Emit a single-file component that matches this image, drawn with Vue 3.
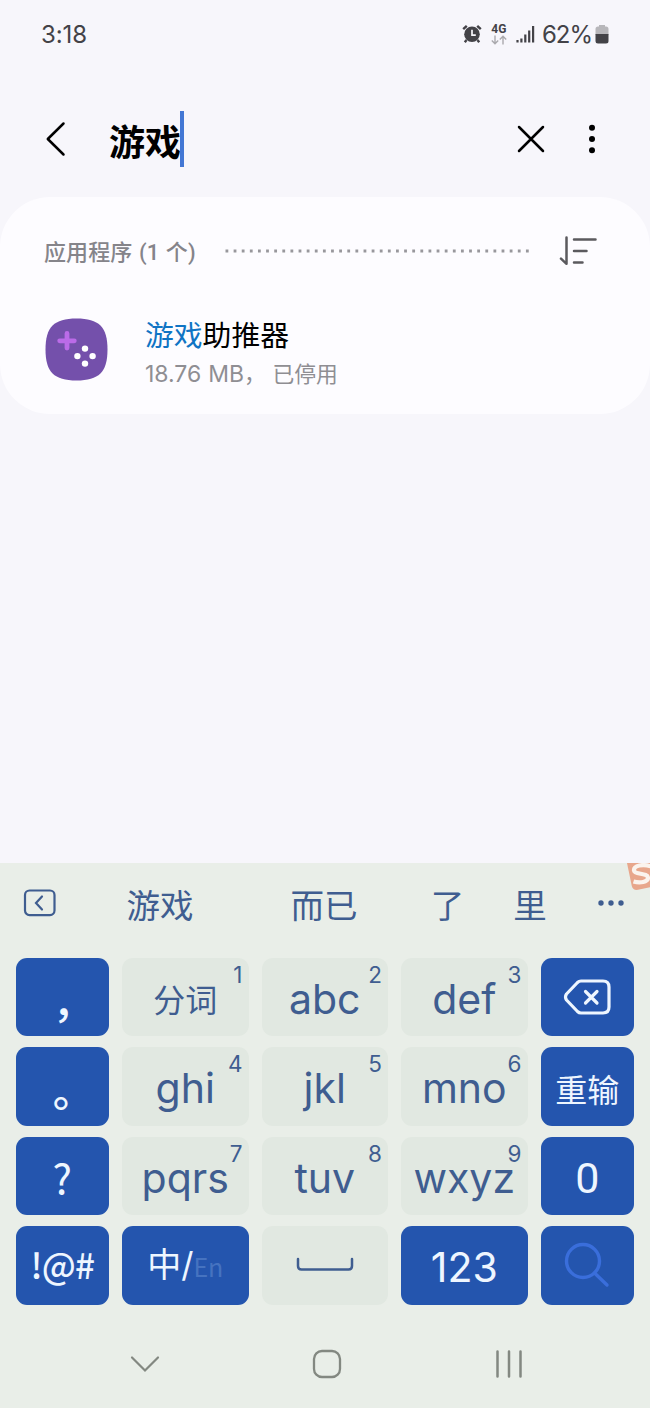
<template>
  <div class="screen">
    <header class="status-bar">
      <span class="clock">3:18</span>
      <div class="status-icons">
        <svg class="alarm" width="20" height="20" viewBox="0 0 20 20">
          <circle cx="10" cy="10.3" r="7.8" fill="#434247" />
          <path d="M1.2 5.2 4.8 1.8M18.8 5.2 15.2 1.8M4.5 16 2.8 18.2M15.5 16l1.7 2.2" stroke="#434247" stroke-width="2.4" />
          <path d="M10 5.8v5.4h3.8" fill="none" stroke="#f7f6fb" stroke-width="1.7" />
        </svg>
        <div class="network">
          <span>4G</span>
          <svg width="16" height="10" viewBox="0 0 16 10">
            <path d="M4 .5v8M.8 5.4 4 8.8l3.2-3.4M12 9.5v-8M8.8 4.6 12 1.2l3.2 3.4" fill="none" stroke="#aaa9ad" stroke-width="1.4" />
          </svg>
        </div>
        <svg class="signal" width="19" height="18" viewBox="0 0 19 18">
          <path d="M1.5 15v2.5M5.4 13.5v4M9.3 9.5v8M13.2 5.5v12M17.1 1v16.5" stroke="#434247" stroke-width="2.2" />
        </svg>
        <span class="percent">62%</span>
        <svg class="battery" width="14" height="19" viewBox="0 0 14 19">
          <path d="M4 0h6v2H4zM3 1.5h8a2.5 2.5 0 0 1 2.5 2.5v6H.5V4A2.5 2.5 0 0 1 3 1.5z" fill="#b7b6ba" />
          <path d="M.5 9h13v7a2.5 2.5 0 0 1-2.5 2.5H3A2.5 2.5 0 0 1 .5 16z" fill="#434247" />
        </svg>
      </div>
    </header>

    <div class="search-bar">
      <svg class="back" width="22" height="36" viewBox="0 0 22 36">
        <path d="M18.5 2.5 2.8 18l15.7 15.5" fill="none" stroke="#000" stroke-width="2.5" stroke-linecap="round" stroke-linejoin="round" />
      </svg>
      <span class="query">游戏</span>
      <span class="caret"></span>
      <svg class="clear" width="28" height="28" viewBox="0 0 28 28">
        <path d="M2 2l24 24M26 2 2 26" stroke="#000" stroke-width="2.5" stroke-linecap="round" />
      </svg>
      <svg class="more" width="8" height="30" viewBox="0 0 8 30">
        <circle cx="4" cy="3.7" r="3" />
        <circle cx="4" cy="15" r="3" />
        <circle cx="4" cy="26.3" r="3" />
      </svg>
    </div>

    <section class="results">
      <div class="section-head">
        <h2>应用程序 (1 个)</h2>
        <svg class="dots" width="306" height="4" viewBox="0 0 306 4">
          <path d="M1.5 2H306" stroke="#98979c" stroke-width="2.8" stroke-dasharray="2.8 5.32" />
        </svg>
        <svg class="sort" width="38" height="30" viewBox="0 0 38 30">
          <path d="M7.5 1.5v26.3L2 22.7" fill="none" stroke="#5b5a5e" stroke-width="2.5" stroke-linecap="round" stroke-linejoin="round" />
          <path d="M15 3.4h21.5M15 15h12.5M15 26.5h8.5" stroke="#5b5a5e" stroke-width="2.5" stroke-linecap="round" />
        </svg>
      </div>
      <div class="app-row">
        <svg class="app-icon" width="63" height="63" viewBox="0 0 63 63">
          <path d="M31.5.5C54 .5 62.5 9 62.5 31.5S54 62.5 31.5 62.5.5 54 .5 31.5 9 .5 31.5.5z" fill="#7450ab" />
          <path d="M22 15.5v14.6M14.7 22.8h14.6" stroke="#bb6be8" stroke-width="4.8" stroke-linecap="round" />
          <g fill="#fff">
            <circle cx="40" cy="30.6" r="3.2" />
            <circle cx="32.4" cy="38.1" r="3.2" />
            <circle cx="47.6" cy="38.1" r="3.2" />
            <circle cx="40" cy="45.6" r="3.2" />
          </g>
        </svg>
        <div class="app-text">
          <div class="app-name"><em>游戏</em>助推器</div>
          <div class="app-meta"><span>18.76 MB</span>， 已停用</div>
        </div>
      </div>
    </section>

    <section class="keyboard">
      <div class="candidates">
        <svg class="collapse" width="34" height="28" viewBox="0 0 34 28">
          <rect x="2" y="1.5" width="29.5" height="24.6" rx="4.5" fill="none" stroke="#3f5d90" stroke-width="2.2" />
          <path d="M19 7.5 13 14l6 6.5" fill="none" stroke="#3f5d90" stroke-width="2.2" stroke-linecap="round" />
        </svg>
        <span v-for="word in candidates" :key="word">{{ word }}</span>
        <svg class="ellipsis" width="28" height="8" viewBox="0 0 28 8">
          <circle cx="4" cy="4" r="2.7" />
          <circle cx="14" cy="4" r="2.7" />
          <circle cx="24" cy="4" r="2.7" />
        </svg>
        <svg class="badge" width="24" height="28" viewBox="0 0 24 28">
          <path d="M0 0h24v24L11 26.8Q6 27.5 4.8 23z" fill="#e8a78c" />
          <path d="M24 3.5C16 .5 6.5 2.5 7 7.5c.5 4.5 14 2 14 7.5 0 4-8 5.5-14.5 3.5" fill="none" stroke="#fbf4ee" stroke-width="4.2" />
        </svg>
      </div>

      <div class="keys">
        <button v-for="key in keys" :key="key.id" class="key" :class="[key.type, 'key-' + key.id]">
          <svg v-if="key.id === 'delete'" width="48" height="36" viewBox="0 0 48 36">
            <path d="M18 2H40q6 0 6 6v20q0 6-6 6H18q-2 0-3.5-1.5L3.5 21q-2-3 0-6L14.5 3.5Q16 2 18 2z" fill="none" stroke="#eef6ff" stroke-width="3.2" stroke-linejoin="round" />
            <path d="m22.5 12.5 11.5 11.5M34 12.5 22.5 24" stroke="#eef6ff" stroke-width="3.2" stroke-linecap="round" />
          </svg>
          <svg v-else-if="key.id === 'space'" width="58" height="18" viewBox="0 0 58 18">
            <path d="M2 3v7q0 3.5 3.5 3.5h47q3.5 0 3.5-3.5V3" fill="none" stroke="#3f5d90" stroke-width="2.5" stroke-linecap="round" />
          </svg>
          <svg v-else-if="key.id === 'search'" width="46" height="46" viewBox="0 0 46 46">
            <circle cx="19" cy="19" r="16.5" fill="none" stroke="#3a6edb" stroke-width="3.4" />
            <path d="M30.5 31 43 43" stroke="#3a6edb" stroke-width="3.4" stroke-linecap="round" />
          </svg>
          <span v-else-if="key.id === 'lang'" class="lang">中<i>/</i><small>En</small></span>
          <span v-else class="label">{{ key.label }}</span>
          <sup v-if="key.digit">{{ key.digit }}</sup>
        </button>
      </div>

      <nav class="nav-bar">
        <svg width="32" height="20" viewBox="0 0 32 20">
          <path d="M3 3.5 16 16.5 29 3.5" fill="none" stroke="#838881" stroke-width="2.2" stroke-linecap="round" />
        </svg>
        <svg width="30" height="30" viewBox="0 0 30 30">
          <rect x="2" y="2" width="26" height="26" rx="8" fill="none" stroke="#838881" stroke-width="2.3" />
        </svg>
        <svg width="30" height="30" viewBox="0 0 30 30">
          <path d="M3.5 2.5v25M15 2.5v25M26.5 2.5v25" stroke="#838881" stroke-width="2.5" stroke-linecap="round" />
        </svg>
      </nav>
    </section>
  </div>
</template>

<script setup>
const candidates = ["游戏", "而已", "了", "里"];

// type: 'blue' for function keys, 'light' for letters, 'cjk' when the label is Chinese
const keys = [
  { id: "comma", label: "，", type: "blue cjk" },
  { id: "split", label: "分词", digit: "1", type: "light cjk" },
  { id: "abc", label: "abc", digit: "2", type: "light" },
  { id: "def", label: "def", digit: "3", type: "light" },
  { id: "delete", type: "blue" },
  { id: "period", label: "。", type: "blue cjk" },
  { id: "ghi", label: "ghi", digit: "4", type: "light" },
  { id: "jkl", label: "jkl", digit: "5", type: "light" },
  { id: "mno", label: "mno", digit: "6", type: "light" },
  { id: "retype", label: "重输", type: "blue cjk" },
  { id: "question", label: "?", type: "blue" },
  { id: "pqrs", label: "pqrs", digit: "7", type: "light" },
  { id: "tuv", label: "tuv", digit: "8", type: "light" },
  { id: "wxyz", label: "wxyz", digit: "9", type: "light" },
  { id: "zero", label: "0", type: "blue" },
  { id: "symbols", label: "!@#", type: "blue" },
  { id: "lang", type: "blue" },
  { id: "space", type: "light" },
  { id: "numbers", label: "123", type: "blue" },
  { id: "search", type: "blue" },
];
</script>

<style>
body {
  margin: 0;
  background: #f7f6fb;
}
</style>

<style scoped>
.screen {
  display: flex;
  flex-direction: column;
  width: 650px;
  height: 1408px;
  overflow: hidden;
  background: #f7f6fb;
  font-family: Inter, "Noto Sans CJK SC", sans-serif;
}
svg {
  display: block;
  flex: none;
}
.status-bar {
  display: flex;
  justify-content: space-between;
  align-items: center;
  height: 68px;
  padding: 0 41px;
  box-sizing: border-box;
  color: #434247;
  font-size: 24px;
}
.clock {
  letter-spacing: -0.1px;
}
.status-icons {
  display: flex;
  align-items: center;
}
.network {
  display: flex;
  flex-direction: column;
  align-items: center;
  width: 18px;
  margin: 0 8px;
  font: bold 12px/11px Roboto, sans-serif;
}
.percent {
  margin: 0 3px 0 7px;
  letter-spacing: -1px;
}
.search-bar {
  display: flex;
  align-items: center;
  height: 128px;
  padding: 0 54px 0 45px;
  margin-bottom: 1px;
}
.search-bar svg {
  position: relative;
  top: 7px;
}
.query {
  margin-left: 42px;
  padding-top: 21px;
  font-size: 36px;
  line-height: 52px;
  font-weight: 700;
}
.caret {
  width: 3.5px;
  height: 56px;
  margin: 14px auto 0 -1px;
  background: #4377d4;
}
.more {
  margin-left: 43px;
}
.results {
  height: 217px;
  border-radius: 50px;
  background: #fdfcff;
}
.section-head {
  display: flex;
  align-items: center;
  height: 108px;
  padding: 0 53px 0 44px;
}
h2 {
  width: 180px;
  margin: 4px 0 0;
  color: #85848a;
  font-family: Roboto, "Noto Sans CJK SC", sans-serif;
  font-size: 22px;
  font-weight: 500;
  line-height: 32px;
  letter-spacing: 0.1px;
  word-spacing: 1px;
  white-space: nowrap;
}
.dots {
  margin-right: auto;
}
.app-row {
  display: flex;
  padding: 12.5px 44.5px 0;
}
.app-text {
  margin: -2px 0 0 37.5px;
}
.app-name {
  color: #000;
  font-size: 28.8px;
  line-height: 40px;
}
.app-name em {
  color: #0f74c4;
  font-style: normal;
}
.app-meta {
  margin-top: 2px;
  color: #8f8e93;
  font-size: 21.8px;
  line-height: 32px;
  white-space: pre;
  word-spacing: 0.5px;
}
.app-meta span {
  font-size: 23px;
}
.keyboard {
  margin-top: auto;
  height: 545.5px;
  background: #e9eee8;
}
.candidates {
  position: relative;
  display: grid;
  grid-template-columns: 80px 160px 168px 79px 86px 76px;
  align-items: center;
  justify-items: center;
  height: 80px;
  color: #3f5d90;
  font-size: 33.5px;
}
.candidates span {
  padding-top: 2px;
}
.ellipsis {
  fill: #3f5d90;
}
.badge {
  position: absolute;
  top: 0;
  right: -1px;
}
.keys {
  display: grid;
  grid-template-columns: 93.5px 126.5px 126.5px 126.5px 93.5px;
  grid-auto-rows: 78.5px;
  gap: 11px 13px;
  padding: 15px 15.5px 0;
}
.key {
  position: relative;
  display: flex;
  align-items: center;
  justify-content: center;
  padding: 0;
  border: 0;
  border-radius: 11px;
  font-family: inherit;
  font-size: 41px;
  white-space: nowrap;
}
.blue {
  background: #2455ae;
  color: #eef6ff;
}
.light {
  background: #e1e8e1;
  color: #3f5d90;
}
.label {
  padding-top: 4px;
  line-height: 36px;
}
.cjk {
  font-size: 32px;
}
.cjk .label {
  padding-top: 9px;
}
.key sup {
  position: absolute;
  top: 7px;
  right: 6px;
  font-size: 22.5px;
  line-height: 20px;
}
.key-comma .label,
.key-period .label {
  padding: 12px 0 0 23px;
  font-size: 42px;
  font-weight: 500;
}
.key-question {
  font-family: "Noto Sans CJK SC", sans-serif;
}
.key-question .label {
  padding-top: 0;
}
.key-zero .label {
  padding-top: 4px;
  font-family: Roboto, sans-serif;
  font-size: 43px;
}
.key-symbols {
  font-family: "Noto Sans CJK SC", sans-serif;
  font-size: 35px;
  font-weight: 500;
  letter-spacing: -0.8px;
}
.key-symbols .label {
  padding: 0 0 3px;
}
.lang {
  padding-bottom: 6px;
  font-size: 34px;
}
.lang i {
  font-style: normal;
}
.lang small {
  color: #4673c0;
  font-family: "Noto Sans CJK SC", sans-serif;
  font-size: 25px;
}
.nav-bar {
  display: grid;
  grid-template-columns: repeat(3, 182px);
  align-items: center;
  justify-items: center;
  height: 118px;
  padding-left: 54px;
}
</style>
